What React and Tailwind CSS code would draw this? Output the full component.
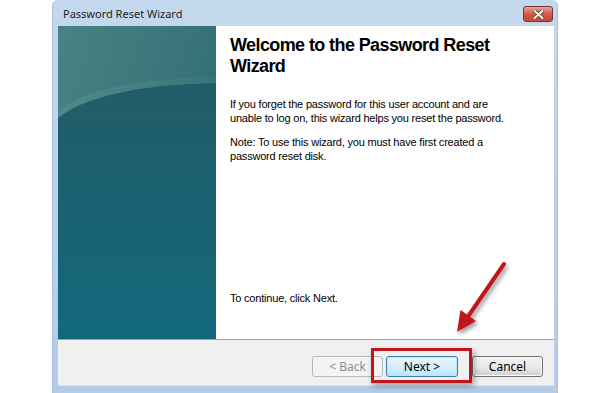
import React from "react";

function Panel() {
  return (
    <svg width="158" height="313" viewBox="0 0 158 313" className="block">
      <defs>
        <linearGradient id="top" x1="0" y1="0" x2="1" y2="0.6">
          <stop offset="0" stopColor="#4a8284" />
          <stop offset="1" stopColor="#2e6c72" />
        </linearGradient>
        <linearGradient id="low" x1="0" y1="0" x2="0" y2="1">
          <stop offset="0" stopColor="#215d68" />
          <stop offset="0.5" stopColor="#1a6172" />
          <stop offset="1" stopColor="#136a7c" />
        </linearGradient>
        <linearGradient id="band" x1="0" y1="0" x2="1" y2="0">
          <stop offset="0" stopColor="#5f9496" stopOpacity="0.4" />
          <stop offset="1" stopColor="#5f9496" stopOpacity="0.1" />
        </linearGradient>
      </defs>
      <rect width="158" height="313" fill="url(#top)" />
      <path d="M0 85 Q 40 53 158 51 L158 57 Q 40 60 0 92 Z" fill="url(#band)" />
      <path d="M0 92 Q 40 60 158 57 L158 313 L0 313 Z" fill="url(#low)" />
    </svg>
  );
}

function Btn({ children, variant }) {
  const base =
    "w-[71px] h-[21px] rounded-[3px] border flex items-center justify-center text-[12px] [font-family:'Noto_Sans',sans-serif]";
  if (variant === "disabled")
    return (
      <div className={`${base} border-[#b5b9bc] bg-[#f4f4f4] text-[#8d8d8d]`}>{children}</div>
    );
  if (variant === "default")
    return (
      <div
        className={`${base} w-[72px] border-[#3c7fb1] bg-gradient-to-b from-[#eaf6fd] to-[#bee6fd] text-black shadow-[inset_0_0_0_1px_#b9e6fb]`}
      >
        {children}
      </div>
    );
  return (
    <div
      className={`${base} border-[#707070] bg-gradient-to-b from-[#f2f2f2] via-[#ebebeb] to-[#cfcfcf] text-black shadow-[inset_0_0_0_1px_#fcfcfc]`}
    >
      {children}
    </div>
  );
}

export default function App() {
  return (
    <div className="relative w-[600px] h-[393px] bg-white overflow-hidden">
      <div className="ml-[52px] w-[506px] h-[393px] rounded-t-[6px] bg-gradient-to-b from-[#c4d8ee] to-[#b4cce8] flex flex-col border-l border-r border-[#a8c0dc]">
        {/* title bar */}
        <div className="h-[26px] flex items-start justify-between">
          <div className="pl-[10px] pt-[7px] text-[11px] leading-[13px] text-[#1e1e1e] [font-family:'Noto_Sans',sans-serif]">
            Password Reset Wizard
          </div>
          <div className="mt-[6px] mr-[4px] w-[30px] h-[16px] rounded-[3px] border border-[#6e3a34] bg-gradient-to-b from-[#e8a495] via-[#d0594a] to-[#c44a3b] flex items-center justify-center">
            <svg width="11" height="9" viewBox="0 0 11 9">
              <path d="M1.5 1 L9.5 8 M9.5 1 L1.5 8" stroke="#5a2a25" strokeWidth="3.4" strokeLinecap="round" />
              <path d="M1.5 1 L9.5 8 M9.5 1 L1.5 8" stroke="#ffffff" strokeWidth="2" strokeLinecap="round" />
            </svg>
          </div>
        </div>
        {/* client */}
        <div className="ml-[5px] mr-[3px] flex flex-col">
          <div className="h-[313px] flex bg-white">
            <Panel />
            <div className="flex-1 pl-[14px] pt-[9px] flex flex-col text-black">
              <div className="text-[18px] leading-[21px] font-bold tracking-[-0.6px] [font-family:'Liberation_Sans',Arial,sans-serif]">
                Welcome to the Password Reset
                <br />
                Wizard
              </div>
              <div className="mt-[20px] text-[11px] leading-[14px] tracking-[-0.2px] [font-family:'Liberation_Sans',Arial,sans-serif] whitespace-nowrap">
                If you forget the password for this user account and are
                <br />
                unable to log on, this wizard helps you reset the password.
              </div>
              <div className="mt-[10px] text-[11px] leading-[14px] tracking-[-0.2px] [font-family:'Liberation_Sans',Arial,sans-serif] whitespace-nowrap">
                Note: To use this wizard, you must have first created a
                <br />
                password reset disk.
              </div>
              <div className="mt-auto mb-[34px] text-[11px] leading-[14px] tracking-[-0.2px] [font-family:'Liberation_Sans',Arial,sans-serif]">
                To continue, click Next.
              </div>
            </div>
          </div>
          <div className="h-px bg-[#a0a0a0]" />
          <div className="h-[46px] bg-[#f0f0f0] flex items-start justify-end pt-[16px] pr-[11px] border-b border-[#e4e4e4]">
            <Btn variant="disabled">&lt; Back</Btn>
            <div className="w-[3px]" />
            <Btn variant="default">Next &gt;</Btn>
            <div className="w-[14px]" />
            <Btn>Cancel</Btn>
          </div>
        </div>
      </div>

      {/* red highlight box */}
      <div className="absolute left-[371px] top-[348px] w-[101px] h-[35px] border-[3px] border-[#c3151c] shadow-[2px_3px_6px_rgba(0,0,0,0.35)]" />

      {/* arrow */}
      <svg className="absolute left-0 top-0 pointer-events-none" width="600" height="393" viewBox="0 0 600 393">
        <defs>
          <filter id="sh" x="-20%" y="-20%" width="140%" height="140%">
            <feDropShadow dx="2" dy="3" stdDeviation="2" floodColor="#000" floodOpacity="0.4" />
          </filter>
        </defs>
        <g filter="url(#sh)">
          <path d="M504 264 L467 318" stroke="#c3151c" strokeWidth="4" strokeLinecap="round" />
          <path d="M457 332 L476 321 L460.5 310 Z" fill="#c3151c" />
        </g>
      </svg>
    </div>
  );
}
